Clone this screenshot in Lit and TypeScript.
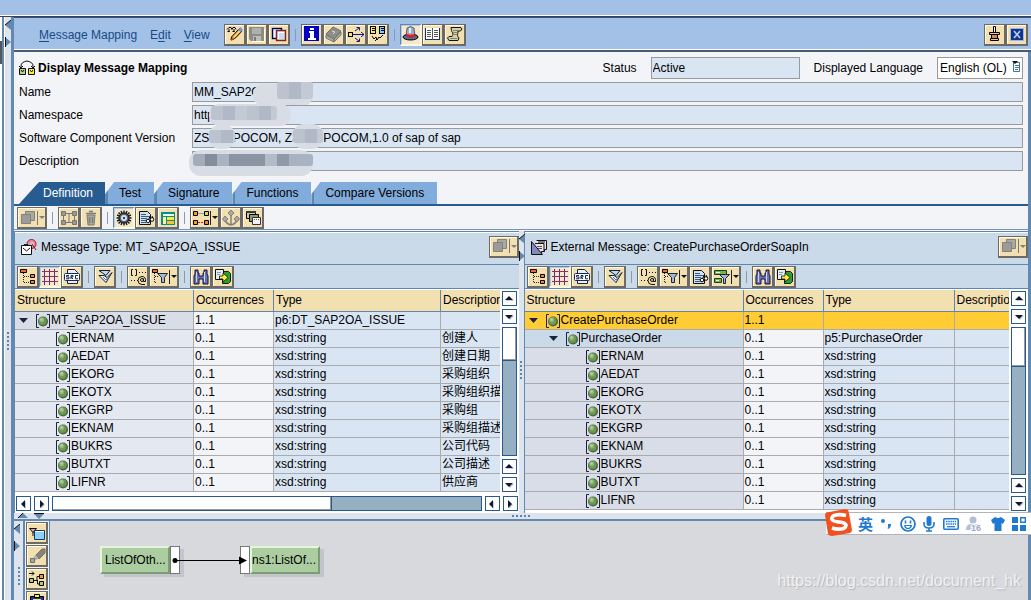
import { LitElement, html, svg, css, nothing, TemplateResult } from "lit";
import { customElement, property } from "lit/decorators.js";

/* Toolbar glyphs, drawn on an 18 x 18 grid. */
const ICONS: Record<string, unknown> = {
  edit: svg`<g fill="none" stroke="#000"><path d="M1 4.500l2-2h2l1 2 1-2h2l1 2M1.500 6.500h2M6.500 6.500h2M3 4v3M8 4v3"/><path d="M13.500 3.500l2.500 2.500-6 6.500-3 2-2 .5.500-3z" fill="#f7b23b"/></g><path d="M5 15.500l1.500-4 2.500 2z" fill="#e06020"/><path d="M12 5l2.500 2.500L17 5l-2.500-3z" fill="#7d95c8"/><path d="M7.500 12.500l6-6.500" stroke="#fff3c0"/>`,
  save: svg`<path d="M1 2h15v14H3l-2-2z" fill="#8b8b88"/><path d="M4 3h9v6H4z" fill="#b0b0ac"/><path d="M5 11h8v5H5z" fill="#bdbdb8"/><path d="M6 12h2v4H6z" fill="#777"/><path d="M16.500 4v12.500H4" fill="none" stroke="#fffbe6"/>`,
  copy: svg`<rect x="2.500" y="3.500" width="9" height="10" fill="#e9f3ff" stroke="#000050" stroke-width="1.400"/><rect x="6.500" y="5.500" width="9" height="10" fill="#c3ddf5" stroke="#8a1f14" stroke-width="1.400"/><path d="M8 7.500h6M8.500 8v6" stroke="#fff"/>`,
  info: svg`<path d="M1 1h15v15H1z" fill="#0000c4"/><path d="M7 3h4v2H7zM6 6h5v7h2v2H5v-2h2V8H6z" fill="#fff"/>`,
  help: svg`<path d="M1 9l7-7 8 4-7 8z" fill="#8d8d8a" stroke="#6f6f6c"/><path d="M1 10l8 4v3l-8-4zM9 14l7-7v3l-7 7z" fill="#a8a8a2" stroke="#777"/><path d="M7 6l3 1-2 2" fill="none" stroke="#ddd"/>`,
  where: svg`<path d="M6 9.500h11M14 7l3 2.500-3 2.500M8 6l4-3M9.500 2.500h3v3M8 13l4 3M9.500 16.500h3v-3" fill="none" stroke="#14148c"/><rect x="1.500" y="7.500" width="4" height="4" fill="#ffe93a" stroke="#000"/>`,
  compare: svg`<rect x="1.500" y="1.500" width="5" height="7" fill="#ffee30" stroke="#000"/><rect x="10.500" y="1.500" width="5" height="7" fill="#7fd0ff" stroke="#000"/><path d="M3 3.500h3M3 5.500h3M12 3.500h3M12 5.500h3" stroke="#000"/><path d="M3 11l2 3 2-2 1 3 2-3 1 1 3-3M8 14l-2 2" fill="none" stroke="#000"/>`,
  hat: svg`<ellipse cx="8.500" cy="12" rx="7.500" ry="3" fill="#5a6a92" stroke="#000"/><path d="M4 11l1-8 3.500-1.500L12 3l1 8q-4.500 3-9 0z" fill="#9caaca" stroke="#333" stroke-width=".7"/><path d="M4 8.500q4.500 2.500 9 0v2.500q-4.500 3-9 0z" fill="#e01c1c"/><path d="M7 3h2v5H7z" fill="#e7edf8"/>`,
  book: svg`<path d="M1 3h15v12H1z" fill="#12307c"/><path d="M2 3h6v11H2zM9 3h6v11H9z" fill="#fff"/><path d="M3 5.500h4M3 7.500h4M3 9.500h4M3 11.500h4M10 5.500h4M10 7.500h4M10 9.500h4M10 11.500h4M8.500 3v12" stroke="#555"/>`,
  scroll: svg`<path d="M5 2.500h10l1 1.500-1.500 2H12c0 4-1.500 4 1 7l-1 2.500H3L1.500 13 3 11.500h3c2-3 0-4-.5-6z" fill="#cfd2a4" stroke="#111"/><path d="M7 5.500h5M7 7.500h4M7 9.500h4M4 13.500h7" stroke="#85896a"/>`,
  pin: svg`<path d="M7.500 1.500h2v6h-2z" fill="#fff" stroke="#000"/><path d="M3.500 7.500h10v2h-10zM4.500 13.500h8v2h-8z" fill="#f4c48c" stroke="#000"/><path d="M5.500 9.500h6v4h-6z" fill="#c98c54" stroke="#000"/>`,
  close: svg`<path d="M2.500 3.500h13v12h-13z" fill="#10358a" stroke="#9db3f0"/><path d="M6 6l6 7M12 6l-6 7" stroke="#b9cdf5" stroke-width="1.600"/>`,
  stack: svg`<path d="M6.500 2.500h9v9h-9z" fill="#a9a8a3" stroke="#83827e"/><path d="M2.500 5.500h9v9h-9z" fill="#9c9b97" stroke="#83827e"/>`,
  mapoff: svg`<g fill="#9a9994" stroke="#777"><path d="M1.500 2.500h4v4h-4zM12.500 2.500h4v4h-4zM1.500 11.500h4v4h-4zM12.500 11.500h4v4h-4z"/><path d="M6 4.500h6M6 13.500h6M3.500 7v4M14.500 7v4M9 5v9" fill="none"/></g>`,
  trash: svg`<path d="M5 6h8l-1 10H6z" fill="#a9a8a3" stroke="#7b7b77"/><path d="M4 4.500h10M7 2.500h4M7.500 8v6M10.500 8v6" stroke="#7b7b77" stroke-width="1.500"/>`,
  gear: svg`<g stroke="#222" stroke-width="1.500"><path d="M9 1.500v15M1.500 9h15M3.500 3.500l11 11M14.500 3.500l-11 11M6 2l6 14M12 2L6 16M2 6l14 6M2 12l14-6"/></g><circle cx="9" cy="9" r="5" fill="#56657a" stroke="#111"/><circle cx="9" cy="9" r="3" fill="#d6e2ee"/><circle cx="9" cy="9" r="1" fill="#111"/>`,
  docglass: svg`<path d="M2.500 2.500h8l3 3v10h-11z" fill="#cfe2f3" stroke="#111"/><path d="M4 5.500h5M4 7.500h8M4 9.500h6M4 11.500h5M4 13.500h5" stroke="#3c5878"/><circle cx="11" cy="12" r="1.800" fill="#fff" stroke="#000"/><circle cx="15" cy="10.500" r="1.800" fill="#fff" stroke="#000"/><path d="M12 10l1-3M16 9l-1-2" stroke="#000"/>`,
  layout: svg`<path d="M2 3h14v13H2z" fill="#0c8c86"/><path d="M4 5h11v2H4z" fill="#e8fbf8"/><path d="M4 8h3v7H4z" fill="#fff3b0"/><path d="M8 8h7v3H8z" fill="#ffe83a"/><path d="M8 12h7v3H8z" fill="#ffc12e"/>`,
  mapcol: svg`<path d="M6 4.500h6" stroke="#7fa8d8"/><path d="M6 13.500h6" stroke="#d01818" stroke-dasharray="2 1"/><g stroke="#000"><path d="M1.500 2.500h4v4h-4zM1.500 11.500h4v4h-4z" fill="#f49a2c"/><path d="M12.500 2.500h4v4h-4z" fill="#ddd264"/><path d="M12.500 11.500h4v4h-4z" fill="#f08a2c"/></g>`,
  anchor: svg`<path d="M9 4v12M9 16q-5-1-6-6M9 16q5-1 6-6" fill="none" stroke="#82817d" stroke-width="1.500"/><path d="M9 1l3 3-3 3-3-3zM3 7l3 3-3 3-2.500-3zM15 7l2.500 3-2.500 3-3-3z" fill="#aaa9a4" stroke="#82817d"/>`,
  windows: svg`<path d="M2.500 2.500h9v7h-9z" fill="#c8c6b0" stroke="#000"/><path d="M2 2h10v2H2z" fill="#3a3a3a"/><path d="M5.500 5.500h9v7h-9z" fill="#8c9c70" stroke="#000"/><path d="M8.500 8.500h8v7h-8z" fill="#eef3fb" stroke="#333"/><path d="M10 10.500h1M12 10.500h1M14 10.500h1" stroke="#c33"/>`,
  tree: svg`<path d="M4.500 5v10M5 8.500h6M5 14.500h6" stroke="#222" stroke-dasharray="1 1" fill="none"/><g stroke="#000"><path d="M1.500 1.500h6v3h-6z" fill="#f26a1c"/><path d="M11.500 6.500h4v3h-4zM11.500 12.500h4v3h-4z" fill="#f28a2c"/></g>`,
  grid: svg`<g stroke="#5a2a8a"><path d="M3.500 1v16M8.500 1v16M13.500 1v16"/><path d="M1 3.500h16M1 8.500h16M1 13.500h16" stroke="#9a3050"/></g>`,
  src: svg`<path d="M4.500 1.500h7l3 3v11h-10z" fill="#e6f0fa" stroke="#223"/><rect x="1.500" y="5.500" width="15" height="7" rx="1" fill="#fff" stroke="#14285a"/><path d="M6 7.500H3.500v1.500H6v1.800H3M8 11V7.500h2v1.500H8l2 2M15 7.500h-2.500v3.300H15" fill="none" stroke="#14285a"/>`,
  collapse: svg`<path d="M3 2.500h11l-4 5z" fill="#bcd7f2" stroke="#12203c"/><path d="M3 7.500l7 7 6-10-5 5-3-2z" fill="#e8f2fc" stroke="#12203c"/><path d="M7 9l3 3 3-4" fill="none" stroke="#4c7ab0"/>`,
  attr: svg`<g fill="none" stroke="#111"><path d="M4 1.500H2.500v6H4M6 1.500h1.500v6H6M10 4.500h1M13 4.500h1M16 4.500h1M2 12.500h1M5 12.500h1M8 12.500h1"/><circle cx="13" cy="12" r="1.500"/><path d="M14.500 10.500v3h2q.5-5-3.500-5t-4 4 4 4h3"/></g>`,
  treefilter: svg`<path d="M3.500 5v10M4 8.500h3M4 14.500h2" stroke="#222" stroke-dasharray="1 1"/><path d="M1.500 1.500h5v3h-5z" fill="#f26a1c" stroke="#000"/><path d="M6.500 5.500h10l-3 4v5h-3v-5z" fill="#9db8d8" stroke="#223"/>`,
  listfilter: svg`<path d="M1.500 2.500h12v4h-12zM1.500 10.500h7v4h-7z" fill="#75b545" stroke="#16401a"/><path d="M3 4.500h4M3 12.500h3" stroke="#fff"/><path d="M6.500 6.500h10l-4 4v5h-2v-5z" fill="#9db8d8" stroke="#223"/>`,
  find: svg`<path d="M3 2h3v3h1v3h4V5h1V2h3v4l1 2v8h-5v-5H7v5H2V8l1-2z" fill="#6a72b4" stroke="#101038"/><path d="M4.500 4v10M12.500 4v10" stroke="#cdd2f2"/>`,
  findnext: svg`<path d="M8.500 3.500h6l2 2v8l-2 2h-6z" fill="#2f9a2f" stroke="#052a05"/><path d="M1.500 1.500h8v10h-8z" fill="#e0ecf8" stroke="#111"/><path d="M3 4.500h4M3 6.500h3" stroke="#89a"/><path d="M5.500 8h3.500V5l5 4.500L9 14v-3H5.500z" fill="#ffef3a" stroke="#111" stroke-width=".8"/>`,
  newobj: svg`<path d="M6.500 6.500h10v9h-10z" fill="#8fd0f8" stroke="#0b3c6c"/><path d="M7 7.500h9" stroke="#fff"/><path d="M1.500 4.500h7l-3.500 4z" fill="#d9a0b8" stroke="#111"/><path d="M5 8v4" stroke="#111"/>`,
  eraser: svg`<path d="M8 8l6-6h3v4l-6 6z" fill="#85847f" stroke="#6f6e6a"/><path d="M7.500 7.500l3 4-3 2-2-3z" fill="#b2b1ac"/><path d="M2.500 11.500h4v4h-4z" fill="#a8a7a2" stroke="#6f6e6a"/>`,
  arrange: svg`<path d="M1 3.500h5M4 1.500l2 2-2 2M6 10.500h3v-4h3M9.500 10v4h3" fill="none" stroke="#111"/><g stroke="#000"><path d="M1.500 8.500h4v4h-4z" fill="#a8d080"/><path d="M11.500 4.500h4v4h-4z" fill="#f49a2c"/><path d="M11.500 11.500h4v4h-4z" fill="#a8d080"/></g>`,
  paste: svg`<path d="M2.500 3.500h13v13h-13z" fill="#1432b4" stroke="#000"/><path d="M6.500 1.500h5v3h-5z" fill="#ffe83a" stroke="#000"/><path d="M5 6.500h8" stroke="#ffe83a"/><path d="M7.500 9.500h8v8h-8z" fill="#fff" stroke="#1432b4"/>`,
};

const mark = () => html`<svg width="14" height="14" viewBox="0 0 14 14" aria-hidden="true">
  <path d="M3 .5H.5v13H3M11 .5h2.500v13H11" fill="none" stroke="#1c2340" />
  <circle cx="7" cy="7.500" r="5" fill="#49693a" /><circle cx="6.500" cy="7" r="4" fill="#6f9557" />
  <circle cx="5.800" cy="6" r="2.400" fill="#8fb478" /><circle cx="5.500" cy="5.500" r="1.200" fill="#b4d2a2" />
</svg>`;

const down = html`<svg width="9" height="5" viewBox="0 0 9 5" aria-hidden="true"><path d="M0 0h9L4.500 5z" fill="#1c2340" /></svg>`;

@customElement("tool-button")
export class ToolButton extends LitElement {
  @property() icon = "";
  @property() label = "";
  @property({ type: Boolean }) split = false;
  @property({ type: Boolean }) on = false;
  @property({ type: Boolean }) off = false;

  static styles = css`
    :host { display: block; flex: none; }
    button {
      display: flex; align-items: center; height: 22px; min-width: 22px; margin: 0; padding: 0 0 0 1px;
      background: #f3e0b0; border: 1px solid #6b6a66; border-width: 1px 2px 2px 1px;
      box-shadow: inset 1px 1px #fffbe6;
    }
    .on { background: #f6e8cc; border-color: #5b87b5 #fff8d8 #fff8d8 #5b87b5; box-shadow: inset 1px 1px #b8cbe0; }
    svg { display: block; flex: none; }
    .bar { width: 1px; height: 14px; background: #222; }
    .wait .bar { background: #777; }
  `;

  render() {
    return html`<button type="button" aria-label=${this.label} ?disabled=${this.off}
      class=${this.on ? "on" : this.off ? "wait" : ""}>
      <svg width="18" height="18" viewBox="0 0 18 18">${ICONS[this.icon]}</svg>
      ${this.split
        ? html`<span class="bar"></span><svg width="7" height="5" viewBox="0 0 7 5"><path d="M1 1h6L4 4z" fill=${this.off ? "#7f7e7a" : "#111"} /></svg>`
        : nothing}
    </button>`;
  }
}

@customElement("scroll-strip")
export class ScrollStrip extends LitElement {
  @property({ type: Boolean, reflect: true }) across = false;
  @property({ type: Number }) thumb = 30;

  static styles = css`
    :host { display: flex; flex-direction: column; gap: 3px; width: 15px; padding: 1px 2px 2px; background: #fff; }
    :host([across]) { flex-direction: row; width: auto; height: 15px; padding: 2px 1px 2px 1px; }
    button {
      flex: none; width: 15px; height: 15px; padding: 0; margin: 0; background: #fff;
      border: 1px solid #28588c; display: grid; place-items: center;
    }
    .track { flex: 1; display: flex; flex-direction: inherit; background: #95b0c2; border: 1px solid #28588c; box-sizing: border-box; }
    .thumb { background: #fff; box-shadow: inset -1px -1px #999; border-bottom: 1px solid #28588c; }
    :host([across]) .thumb { border-bottom: 0; border-right: 1px solid #28588c; }
    svg { display: block; }
  `;

  private arrow(dir: "up" | "down" | "left" | "right") {
    const d = { up: "M1 6h8L5 2z", down: "M1 3h8L5 7z", left: "M6 1v8L2 5z", right: "M3 1v8l4-4z" }[dir];
    return html`<button type="button" aria-label=${"Scroll " + dir}>
      <svg width="10" height="10" viewBox="0 0 10 10"><path d=${d} transform="translate(1 1)" fill="#c5cbd8" /><path d=${d} fill="#111830" /></svg>
    </button>`;
  }

  render() {
    const a = this.across ? "left" : "up";
    const b = this.across ? "right" : "down";
    return html`${this.arrow(a)}${this.arrow(b)}
      <div class="track"><div class="thumb" style="flex-basis:${this.thumb}%"></div></div>
      ${this.arrow(a)}${this.arrow(b)}`;
  }
}

interface Row { name: string; level: number; open?: boolean; selected?: boolean; occ: string; type: string; text: string; }
const leaf = (name: string, level: number, text = ""): Row => ({ name, level, occ: "0..1", type: "xsd:string", text });

const SOURCE: Row[] = [
  { name: "MT_SAP2OA_ISSUE", level: 0, open: true, occ: "1..1", type: "p6:DT_SAP2OA_ISSUE", text: "" },
  leaf("ERNAM", 1, "创建人"), leaf("AEDAT", 1, "创建日期"), leaf("EKORG", 1, "采购组织"),
  leaf("EKOTX", 1, "采购组织描述"), leaf("EKGRP", 1, "采购组"), leaf("EKNAM", 1, "采购组描述"),
  leaf("BUKRS", 1, "公司代码"), leaf("BUTXT", 1, "公司描述"), leaf("LIFNR", 1, "供应商"),
];
const TARGET: Row[] = [
  { name: "CreatePurchaseOrder", level: 0, open: true, selected: true, occ: "1..1", type: "", text: "" },
  { name: "PurchaseOrder", level: 1, open: true, occ: "0..1", type: "p5:PurchaseOrder", text: "" },
  ...["ERNAM", "AEDAT", "EKORG", "EKOTX", "EKGRP", "EKNAM", "BUKRS", "BUTXT", "LIFNR"].map((n) => leaf(n, 2)),
];

@customElement("structure-pane")
export class StructurePane extends LitElement {
  @property({ type: Boolean, reflect: true }) target = false;

  static styles = css`
    :host { display: flex; flex-direction: column; min-width: 0; border-top: 1px solid #5f87ab; background: #fff; }
    .head { display: flex; align-items: center; gap: 4px; height: 31px; margin-top: 1px; padding: 0 0 4px 6px; box-sizing: border-box; background: #cbdae9; }
    .head h2 { margin: 0; font: inherit; flex: 1; white-space: nowrap; }
    .tools { display: flex; align-items: center; border-top: 1px solid #5f87ab; border-bottom: 1px solid #5f87ab; background: #cbdae9; padding: 1px 0 0 2px; }
    .sep { width: 1px; height: 12px; margin: 0 5px; background: #8d99a8; }
    .body { display: flex; flex: 1; margin-top: 1px; }
    .view { flex: 1; min-width: 0; overflow: hidden; padding-bottom: 2px; }
    table { table-layout: fixed; border-collapse: separate; border-spacing: 0; }
    .structure { width: 179px; }
    :host([target]) .structure { width: 219px; }
    .occ { width: 80px; }
    .type { width: 167px; }
    :host([target]) .type { width: 131px; }
    .desc { width: 90px; }
    th, td { box-sizing: border-box; padding: 0 0 0 1px; text-align: left; font-weight: normal; white-space: nowrap; line-height: 17px; }
    th { height: 22px; background: #f3e0b0; border-right: 1px solid #5f87ab; border-bottom: 1px solid #5f87ab; padding-left: 2px; }
    td { height: 18px; background: #d9e5f3; border-right: 1px solid #a9abaf; border-bottom: 1px solid #a9abaf; }
    td.s { background: #e4e8f0; }
    :host([target]) td.s { background: #d9dde7; }
    td.s.lv0 { background: #d9dde7; }
    :host([target]) td.s.lv1 { background: #cbdae9; }
    td.o { background: #f3f4f8; }
    :host([target]) .sel td { background: #ffcc33; }
    .node { display: flex; align-items: center; }
    .node i { width: 17px; display: flex; flex: none; }
    .node svg { flex: none; }
    .lv0 .node { padding-left: 3px; }
    .lv1 .node { padding-left: 23px; }
    .lv2 .node { padding-left: 43px; }
    .node span { padding-left: 1px; }
  `;

  private tool(icon: string, label: string, split = false, on = false) {
    return html`<tool-button icon=${icon} label=${label} ?split=${split} ?on=${on}></tool-button>`;
  }

  render() {
    const t = this.target;
    const sep = html`<span class="sep"></span>`;
    return html`
      <div class="head">
        ${t
          ? html`<svg width="16" height="16" viewBox="0 0 16 16"><path d="M5.500 1.500h10v9h-2v2h-3v2h-6" fill="#efe3e8" stroke="#111" /><path d="M4 4.500h9v8M7 3h7" fill="none" stroke="#111" /><path d="M6 7.500h5M6 9.500h5" stroke="#555" /><path d="M.5 2.500v13h11z" fill="#8288c0" stroke="#111" /></svg>`
          : html`<svg width="16" height="16" viewBox="0 0 16 16"><circle cx="10.500" cy="5" r="4.500" fill="#f58a8c" stroke="#a01830" /><circle cx="11" cy="5" r="2" fill="#b8d0f0" /><path d="M11 5l4 6" stroke="#801030" /><path d="M.5 6.500h10v9H.5z" fill="#fff" stroke="#111" /><path d="M2 9l3.500 3L9 9" fill="none" stroke="#111" /><path d="M3 5.500h4" stroke="#222" /></svg>`}
        <h2>${t ? "External Message: CreatePurchaseOrderSoapIn" : "Message Type: MT_SAP2OA_ISSUE"}</h2>
        <tool-button icon="stack" label="Change message" split off></tool-button>
      </div>
      <div class="tools" role="toolbar">
        ${this.tool("tree", "Expand all")}${this.tool("grid", "Table view", false, true)}${this.tool("src", "Source")}
        ${sep}${this.tool("collapse", "Collapse")}${sep}
        ${this.tool("attr", "Attributes")}${this.tool("treefilter", "Filter", true)}
        ${t ? html`${this.tool("docglass", "Show text")}${this.tool("listfilter", "Mapped fields", true)}` : nothing}
        ${sep}${this.tool("find", "Find")}${this.tool("findnext", "Find next")}
      </div>
      <div class="body">
        <div class="view">
          <table style="width:${t ? 520 : 516}px">
            <colgroup><col class="structure" /><col class="occ" /><col class="type" /><col class="desc" /></colgroup>
            <thead><tr><th>Structure</th><th>Occurrences</th><th>Type</th><th>Description</th></tr></thead>
            <tbody>
              ${(t ? TARGET : SOURCE).map((r) => html`<tr class=${r.selected ? "sel" : ""}>
                <td class="s lv${r.level}"><div class="node"><i>${r.open ? down : nothing}</i>${mark()}<span>${r.name}</span></div></td>
                <td class="o">${r.occ}</td><td>${r.type}</td><td>${r.text}</td>
              </tr>`)}
            </tbody>
          </table>
        </div>
        <scroll-strip thumb=${t ? 26 : 25}></scroll-strip>
      </div>
      ${t ? nothing : html`<scroll-strip across thumb="65"></scroll-strip>`}
    `;
  }
}

@customElement("app-root")
export class AppRoot extends LitElement {
  static styles = css`
    :host {
      display: flex; flex-direction: column; position: relative; height: 100vh; min-height: 600px; overflow: hidden;
      box-sizing: border-box; background: #f3f4f8; color: #000;
      font: 12px/16px "Liberation Sans", Arial, "Noto Sans CJK SC", sans-serif;
    }
    .strip { flex: none; height: 15px; background: #a3c0e6; border-bottom: 1px solid #fff; }
    .frame { flex: 1; display: flex; min-height: 0; border-top: 1px solid #3a4148; }
    .rail { flex: none; width: 11px; display: flex; background: #dde4ed; }
    .old { width: 2px; background: #fff; border-right: 2px solid #6389b0; display: flex; flex-direction: column; padding-top: 24px; }
    .old b { height: 23px; background: #55565a; }
    .grip { flex: 1; border-left: 1px solid #fff; display: flex; flex-direction: column; align-items: flex-end; position: relative; padding-top: 3px; }
    .dots { width: 2px; height: 18px; background: repeating-linear-gradient(#5b84ad 0 2px, transparent 2px 4px); }
    .rail .dots { position: absolute; top: 315px; left: 2px; }
    .tri { display: block; flex: none; }
    .main { flex: 1; min-width: 0; display: flex; flex-direction: column; border-left: 3px solid #6389b0; }
    .menu { flex: none; display: flex; align-items: center; height: 29px; background: #a3c0e6; border-top: 1px solid #31558a; padding: 2px 3px 0 25px; }
    .menu nav { display: flex; gap: 13px; margin-right: 14px; }
    .menu nav button { border: 0; padding: 0; margin: 0; background: none; font: inherit; color: #174a86; }
    .menu u { text-underline-offset: 2px; }
    .menubase { flex: none; height: 1px; background: #fff; border-bottom: 2px solid #4a5c72; }
    .tools { display: flex; align-items: center; }
    .sep { width: 1px; height: 12px; margin: 0 5px; background: #8d99a8; }
    .push { margin-left: auto; display: flex; }
    .content { flex: 1; min-height: 0; display: flex; flex-direction: column; border-right: 3px solid #6389b0; }

    .form { flex: none; display: flex; flex-direction: column; gap: 3px; padding: 5px 5px 0; }
    .line { display: flex; align-items: center; }
    .title { display: flex; align-items: center; gap: 3px; margin: 0; font: inherit; font-weight: bold; flex: 1; }
    .line > label { flex: none; width: 173px; }
    .line > .auto { width: auto; margin-right: 14px; }
    .line input { box-sizing: border-box; min-width: 0; height: 20px; margin: 0; padding: 0 1px; font: inherit; color: inherit; background: #d9e5f3; border: 1px solid #999a9c; outline: 0; border-radius: 0; }
    .wrap { flex: 1; display: flex; position: relative; }
    .wrap input { flex: 1; }
    .line .status { width: 149px; height: 22px; margin-right: 14px; }
    .lang { position: relative; display: flex; }
    .lang select { appearance: none; box-sizing: border-box; width: 86px; height: 22px; margin: 0; padding: 0 2px; font: inherit; color: #000; background: #fff; border: 1px solid #999a9c; border-radius: 0; }
    .lang svg { position: absolute; right: 2px; top: 4px; pointer-events: none; }
    .smudge { position: absolute; border-radius: 10px; background: #d8dde5; }
    .smudge::after { content: ""; position: absolute; border-radius: 3px; background: repeating-linear-gradient(90deg, #bcc3cf 0 12px, #b1b9c8 12px 24px, #c3cad6 24px 36px); }
    .s1 { left: 61px; top: 2px; width: 60px; height: 22px; }
    .s1::after { inset: -2px 0 7px 24px; }
    .s2 { left: 17px; top: -1px; width: 82px; height: 22px; }
    .s2::after { inset: 2px 14px 6px 2px; }
    .s3 { left: 17px; top: -3px; width: 26px; height: 24px; }
    .s4 { left: 101px; top: -4px; width: 30px; height: 25px; }
    .s3::after, .s4::after { inset: 5px 0 6px 0; }
    .s5 { left: -3px; top: -1px; width: 124px; height: 26px; border-radius: 12px; }
    .s5::after { inset: 4px 0 10px 4px; background: linear-gradient(90deg, #a4acb9 0 12px, #838d9b 12px 24px, #aab3c0 24px 36px, #8b94a2 36px 72px, #b2bcc9 72px 84px, #8f99a7 84px 96px, #a9b2c0 96px); }

    .tabs { flex: none; display: flex; margin: 11px 0 0 5px; }
    .tabs button { height: 22px; margin: 0; padding: 0 13px 0 14px; border: 0; font: inherit; color: #000; background: linear-gradient(90deg, #5b88b0 3px, #82acdb 3px); clip-path: polygon(9px 0, 100% 0, 100% 100%, 0 100%, 0 12px); }
    .tabs .cur { padding: 0 12px 0 24px; background: #265c90; color: #fff; clip-path: polygon(20px 0, 100% 0, 100% 100%, 0 100%, 0 22px); }
    .bar { flex: none; display: flex; align-items: center; padding: 1px 3px 0; border-top: 2px solid #265c90; border-bottom: 1px solid #7d93ab; margin-bottom: 1px; }
    .panes { flex: none; display: grid; grid-template-columns: minmax(0, 1fr) 6px minmax(0, 1fr); padding-left: 1px; background: #6389b0; }
    .split { background: #dde4ed; display: flex; flex-direction: column; position: relative; border-right: 1px solid #6389b0; padding-top: 3px; }
    .split .dots { position: absolute; top: 130px; left: 1px; }
    .hsplit { flex: none; height: 6px; background: #dde4ed; border-bottom: 2px solid #6389b0; display: flex; justify-content: center; align-items: center; position: relative; }
    .hdots { width: 18px; height: 2px; background: repeating-linear-gradient(90deg, #5b84ad 0 2px, transparent 2px 4px); }
    .hsplit svg { position: absolute; left: 4px; top: 0; }
    .lower { flex: 1; min-height: 0; display: flex; overflow: hidden; }
    .side { flex: none; width: 9px; box-sizing: content-box; background: #dde4ed; border-right: 2px solid #6389b0; position: relative; padding-top: 3px; }
    .side .dots { position: absolute; top: 46px; left: 4px; }
    .vtools { flex: none; display: flex; flex-direction: column; gap: 1px; padding: 1px 1px 0; background: #f3f4f8; border-right: 1px solid #6389b0; }
    .canvas { flex: 1; position: relative; background: #d8d9dd; overflow: hidden; }
    .fn { position: absolute; top: 25px; display: flex; height: 28px; width: 80px; box-shadow: 4px 3px #c3c5cc; }
    .fn span { flex: 1; background: #abcda1; border: 2px solid #e4f5dc; border-right-color: #7c9c74; border-bottom-color: #7c9c74; box-sizing: border-box; line-height: 24px; padding-left: 3px; white-space: nowrap; }
    .fn b { width: 10px; box-sizing: border-box; background: #fff; border: 1px solid #777; }
    .fn.b span { padding-left: 0; }
    .fn.a { left: 50px; }
    .fn.b { left: 190px; }
    .wire { position: absolute; left: 122px; top: 34px; }
    .mark { position: absolute; right: 7px; bottom: 9px; font-size: 16px; line-height: 20px; color: #f0f1f3; text-shadow: 1px 1px 1px #b4b5ba; }

    .ime { position: absolute; right: 0; top: 512px; width: 205px; height: 23px; box-sizing: border-box; display: flex; align-items: center; justify-content: space-between; padding: 0 5px 0 32px; background: #fff; border: 1px solid #b0b4bc; border-width: 1px 0; color: #1f78d1; }
    .ime b { font: bold 15px/20px "Noto Sans CJK SC", sans-serif; }
    .ime svg { display: block; flex: none; }
    .ime .logo { position: absolute; left: -2px; top: -5px; }
  `;

  private tool(icon: string, label: string, o: { split?: boolean; on?: boolean; off?: boolean } = {}): TemplateResult {
    return html`<tool-button icon=${icon} label=${label} ?split=${o.split} ?on=${o.on} ?off=${o.off}></tool-button>`;
  }

  private field(id: string, label: string, value: string, smudges: string[]) {
    return html`<div class="line"><label for=${id}>${label}</label>
      <div class="wrap"><input id=${id} readonly .value=${value} />${smudges.map((s) => html`<span class="smudge ${s}"></span>`)}</div></div>`;
  }

  private handles() {
    return html`<svg class="tri" width="6" height="28" viewBox="0 0 6 28"><path d="M6 0v10L0 5z" fill="#6389b0" /><path d="M6 0L0 5" stroke="#111" /><path d="M0 17v10l6-5z" fill="#6389b0" /><path d="M.5 17v10" stroke="#111" /></svg>`;
  }

  render() {
    const sep = html`<span class="sep"></span>`;
    return html`
      <div class="strip"></div>
      <div class="frame">
        <div class="rail"><div class="old"><b></b></div><div class="grip">${this.handles()}<div class="dots"></div></div></div>
        <div class="main">
          <div class="menu">
            <nav>
              <button type="button"><u>M</u>essage Mapping</button><button type="button">E<u>d</u>it</button><button type="button"><u>V</u>iew</button>
            </nav>
            <div class="tools" role="toolbar">
              ${this.tool("edit", "Edit")}${this.tool("save", "Save", { off: true })}${this.tool("copy", "Copy")}${sep}
              ${this.tool("info", "Info")}${this.tool("help", "Documentation", { off: true })}${this.tool("where", "Where-used list")}${this.tool("compare", "Compare")}${sep}
              ${this.tool("hat", "Header", { on: true })}${this.tool("book", "Documentation")}${this.tool("scroll", "History")}
            </div>
            <div class="push">${this.tool("pin", "Detach")}${this.tool("close", "Close")}</div>
          </div>
          <div class="menubase"></div>
          <div class="content">
            <div class="form">
              <div class="line">
                <h1 class="title"><svg width="16" height="16" viewBox="0 0 16 16"><path d="M2 8V6q0-4 6-5 6 1 6 5v2M0 6l2 2 2-2M12 6l2 2 2-2" fill="none" stroke="#111" /><path d="M.5 8.500h6v6h-6z" fill="#b8d084" stroke="#111" /><path d="M9.500 8.500h6v6h-6z" fill="#ffee30" stroke="#111" /><path d="M2 10l1.500 2L5 10M11 10l1.500 2 1.500-2" fill="none" stroke="#111" /></svg>Display Message Mapping</h1>
                <label class="auto" for="status">Status</label><input id="status" class="status" readonly .value=${"Active"} />
                <label class="auto" for="lang">Displayed Language</label>
                <div class="lang"><select id="lang"><option>English (OL)</option></select>
                  <svg width="9" height="12" viewBox="0 0 9 12"><path d="M1.500 1.500h6v9h-6z" fill="#fff" stroke="#44749c" /><path d="M3 4.500h4M3 6.500h4M3 8.500h3" stroke="#44749c" /><path d="M0 0h6L3 3z" fill="#111" /></svg></div>
              </div>
              ${this.field("name", "Name", "MM_SAP2O", ["s1"])}
              ${this.field("ns", "Namespace", "http", ["s2"])}
              ${this.field("scv", "Software Component Version", "ZS       POCOM, ZS       POCOM,1.0 of sap of sap", ["s3", "s4"])}
              ${this.field("desc", "Description", "", ["s5"])}
            </div>
            <div class="tabs" role="tablist">
              ${["Definition", "Test", "Signature", "Functions", "Compare Versions"].map((t, i) => html`<button type="button" role="tab" aria-selected=${i === 0} class=${i === 0 ? "cur" : ""}>${t}</button>`)}
            </div>
            <div class="bar" role="toolbar">
              ${this.tool("stack", "Objects", { split: true, off: true })}${sep}
              ${this.tool("mapoff", "Map", { off: true })}${this.tool("trash", "Delete", { off: true })}${sep}
              ${this.tool("gear", "Data flow", { on: true })}${this.tool("docglass", "Text preview")}${this.tool("layout", "Layout")}${sep}
              ${this.tool("mapcol", "Dependencies", { split: true })}${this.tool("anchor", "Parameters", { off: true })}${this.tool("windows", "Windows")}
            </div>
            <div class="panes">
              <structure-pane></structure-pane>
              <div class="split">${this.handles()}<div class="dots"></div></div>
              <structure-pane target></structure-pane>
            </div>
            <div class="hsplit"><svg width="26" height="6" viewBox="0 0 26 6"><path d="M5 0l5 5H0z" fill="#6389b0" /><path d="M5 0L0 5" stroke="#111" /><path d="M16 1h10l-5 5z" fill="#6389b0" /><path d="M16 .5h10" stroke="#111" /></svg><div class="hdots"></div></div>
            <div class="lower">
              <div class="side">${this.handles()}<div class="dots"></div></div>
              <div class="vtools" role="toolbar">
                ${this.tool("newobj", "New function")}${this.tool("eraser", "Clear", { off: true })}${this.tool("arrange", "Arrange")}${this.tool("paste", "Paste")}
              </div>
              <div class="canvas">
                <div class="fn a"><span>ListOfOth...</span><b></b></div>
                <div class="fn b"><b></b><span>ns1:ListOf...</span></div>
                <svg class="wire" width="76" height="11" viewBox="0 0 76 11"><circle cx="3" cy="5.500" r="2.500" /><path d="M3 5.500h66" stroke="#000" /><path d="M67 1.500l8 4-8 4z" /></svg>
                <div class="mark">https://blog.csdn.net/document_hk</div>
              </div>
            </div>
          </div>
        </div>
      </div>
      <div class="ime">
        <svg class="logo" width="30" height="29" viewBox="0 0 30 29"><path d="M1 7Q1 5 3 4.500L21 1q3 0 3.500 2L28 22q0 2-2 3L8 28q-3 0-4-2z" fill="#f2501e" /><path d="M22 7.500q-6-1.500-10-.5-5 1-4 4.500 1 2 7 2.500t7 3q0 3.500-5 4-5 .5-9-1" fill="none" stroke="#fff" stroke-width="3.600" /></svg>
        <b>英</b>
        <svg width="12" height="14" viewBox="0 0 12 14"><circle cx="3" cy="4" r="2" fill="#1f78d1" /><path d="M8 7h3q0 4-3 5l-.5-1Q9 10 8 9z" fill="#1f78d1" /></svg>
        <svg width="16" height="16" viewBox="0 0 16 16"><circle cx="8" cy="8" r="7" fill="none" stroke="#1f78d1" stroke-width="1.700" /><path d="M5.500 4.500v3M10.500 4.500v3" stroke="#1f78d1" stroke-width="1.600" /><path d="M4.500 9.500h7q-1 3-3.500 3t-3.500-3" fill="none" stroke="#1f78d1" stroke-width="1.200" /></svg>
        <svg width="12" height="16" viewBox="0 0 12 16"><rect x="3.500" y="0" width="5" height="10" rx="2.500" fill="#1f78d1" /><path d="M1 6v2q0 4 5 4t5-4V6M6 12v3M3 15h6" fill="none" stroke="#1f78d1" stroke-width="1.600" /></svg>
        <svg width="16" height="12" viewBox="0 0 16 12"><rect x=".8" y=".8" width="14.400" height="10.400" rx="1" fill="#fff" stroke="#1f78d1" stroke-width="1.600" /><path d="M3 3.500h10M3 6h10" stroke="#1f78d1" stroke-width="1.500" stroke-dasharray="1.500 .7" /><path d="M4 8.700h8" stroke="#1f78d1" stroke-width="1.300" /></svg>
        <svg width="17" height="16" viewBox="0 0 17 16"><circle cx="7" cy="4" r="3.500" fill="#b4bed4" /><path d="M0 14q0-6 5-6h4q3 0 4 3v3z" fill="#b4bed4" /><text x="5" y="15" font-size="9" font-weight="bold" font-family="Liberation Sans, sans-serif" fill="#9aa8c6" stroke="#fff" stroke-width="2" paint-order="stroke">16</text></svg>
        <svg width="14" height="14" viewBox="0 0 14 14"><path d="M0 3l4-3q3 2 6 0l4 3-2 4-1.500-1v8h-7V6L2 7z" fill="#1f78d1" /></svg>
        <svg width="14" height="14" viewBox="0 0 14 14"><path d="M0 0h6v6H0zM0 8h6v6H0zM8 8h6v6H8z" fill="#1f78d1" /><path d="M8.700.7h4.600v4.600H8.700z" fill="none" stroke="#1f78d1" stroke-width="1.400" /></svg>
      </div>
    `;
  }
}
